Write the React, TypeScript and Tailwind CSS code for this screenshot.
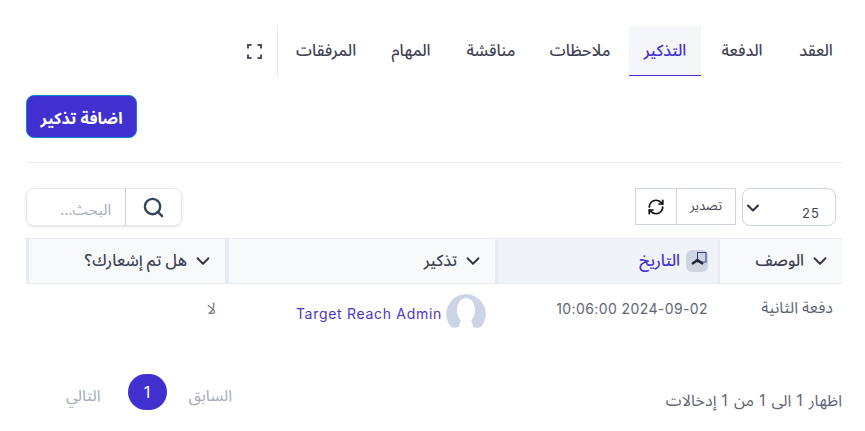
import { ChevronDown, RefreshCw, Search } from 'lucide-react'

const font = "font-['Noto_Sans_Arabic','DejaVu_Sans',sans-serif]"

const tabs = [
  { label: 'العقد', width: 'w-[66px]' },
  { label: 'الدفعة', width: 'w-[82px]' },
  { label: 'التذكير', width: 'w-[72px]', active: true },
  { label: 'ملاحظات', width: 'w-[98px]' },
  { label: 'مناقشة', width: 'w-[80px]' },
  { label: 'المهام', width: 'w-[80px]' },
  { label: 'المرفقات', width: 'w-[90px]' },
]

function Tabs() {
  return (
    <div className="flex items-stretch h-[50px] -mr-[7px]">
      {tabs.map(t => (
        <div
          key={t.label}
          className={`${t.width} flex items-center justify-center text-[16px] font-medium ${
            t.active ? 'bg-[#f5f6f9] text-[#4030d0] border-b border-[#4030d0]' : 'text-[#3f4254]'
          }`}
        >
          {t.label}
        </div>
      ))}
      <div className="w-px bg-[#e4e9f0] mr-[3px]" />
      <div className="flex items-center pr-[15px]">
        <svg width="15" height="15" viewBox="0 0 15 15" fill="none" stroke="#4a5060" strokeWidth="2">
          <path d="M1 4.5V1h3.5M10.5 1H14v3.5M14 10.5V14h-3.5M4.5 14H1v-3.5" />
        </svg>
      </div>
    </div>
  )
}

function HeaderCell({ label, width, active }: { label: string; width: string; active?: boolean }) {
  return (
    <div
      className={`${width} flex items-center h-full text-[16px] font-medium ${
        active ? 'bg-[#f0f3f8] text-[#4030d0] gap-[6px] pr-[10px]' : 'bg-[#f8f9fb] text-[#3f4254] gap-[5px] pr-[11px]'
      }`}
    >
      {active ? (
        <span className="w-[22px] h-[22px] rounded-[6px] bg-[#cdd5e0]">
          <svg width="22" height="22" viewBox="0 0 22 22" fill="none">
            <rect x="11.5" y="2.5" width="8.5" height="9.5" stroke="#3a3a8c" />
            <path d="M6 14l5.5-4 5.5 4" stroke="#1e2433" strokeWidth="2.25" />
          </svg>
        </span>
      ) : (
        <ChevronDown size={22} className="text-[#2d3340]" strokeWidth={2} />
      )}
      <span>{label}</span>
    </div>
  )
}

export default function App() {
  return (
    <div dir="rtl" className={`${font} w-[865px] h-[431px] bg-white pl-[26px] pr-[23px] pt-[26px] overflow-hidden`}>
      <Tabs />

      <div className="flex justify-end mt-[19px]">
        <button className="w-[111px] h-[43px] pt-[4px] rounded-[8px] bg-[#4030d0] border border-[#0f86c9] text-white text-[16px] font-bold">
          اضافة تذكير
        </button>
      </div>

      <div className="h-px bg-[#eceef2] mt-[24px]" />

      <div className="flex justify-between items-start mt-[25px]">
        <div className="flex gap-[6px] mr-[6px]">
          <div className="w-[94px] h-[38px] rounded-[8px] border border-[#cdd5e0] relative">
            <ChevronDown size={20} strokeWidth={2.5} className="absolute left-0 top-[9px] text-[#2d3340]" />
            <span className="absolute left-[59px] top-[15px] text-[13px] tracking-[1px] font-['Inter',sans-serif] text-[#3f4254]">25</span>
          </div>
          <div className="flex h-[37px] border border-[#cdd5e0]">
            <div className="w-[58px] flex items-center justify-center text-[13px] text-[#3f4254]">تصدير</div>
            <div className="w-[41px] border-r border-[#cdd5e0] flex items-center justify-center">
              <RefreshCw size={18} strokeWidth={2.25} className="text-[#111]" />
            </div>
          </div>
        </div>

        <div className="flex w-[156px] h-[38px] rounded-[8px] border border-[#e6e8ec] shadow-sm">
          <div className="w-[55px] flex items-center justify-center">
            <Search size={23} strokeWidth={2.5} className="text-[#33475b]" />
          </div>
          <div className="flex-1 border-r border-[#cfcfcf] flex items-center pr-[14px] pt-[6px] text-[15px] text-[#a3adba]">
            البحث...
          </div>
        </div>
      </div>

      <div className="mt-[12px] flex h-[46px] border-y border-[#e8ecf2] border-l-[3px] border-l-[#e8ecf2] bg-[#e8ecf2]">
        <HeaderCell label="الوصف" width="w-[122px]" />
        <HeaderCell label="التاريخ" width="w-[220px] mr-[2px]" active />
        <HeaderCell label="تذكير" width="w-[266px] mr-[3px]" />
        <HeaderCell label="هل تم إشعارك؟" width="flex-1 mr-[4px]" />
      </div>

      <div className="flex h-[57px] text-[16px] text-[#5e6675]">
        <div className="w-[125px] pr-[9px] pt-[12px]">دفعة الثانية</div>
        <div className="w-[222px] pr-[9px] pt-[14px] text-[14px] tracking-[0.4px] font-['Inter',sans-serif]" dir="ltr">
          <div className="text-right">10:06:00 2024-09-02</div>
        </div>
        <div className="w-[271px] flex pl-[4px] pt-[10px] items-start gap-[4px] pr-[9px]">
          <svg width="40" height="36" viewBox="0 0 40 36">
            <path
              d="M20 0a20 20 0 0 1 15 33c-2 1-5 1-8 0 0-3-1-4-2-6 3-4 4-8 4-11 0-7-4-12-9-12s-9 5-9 12c0 3 1 7 4 11-1 2-2 3-2 6-3 1-6 1-8 0A20 20 0 0 1 20 0z"
              fill="#cdd5e4"
            />
          </svg>
          <span className="text-[#4a35c8] pt-[9px] text-[14px] tracking-[0.7px] font-['Inter',sans-serif]">Target Reach Admin</span>
        </div>
        <div className="flex-1 pr-[8px] pt-[13px] text-[#767d8a]">لا</div>
      </div>

      <div className="flex justify-between items-start mt-[33px]">
        <div className="text-[16px] text-[#5e6675] pt-[15px]">اظهار 1 الى 1 من 1 إدخالات</div>
        <div className="flex items-center text-[16px] text-[#a3adba] ml-[40px]">
          <span className="ml-[22px] pt-[8px]">السابق</span>
          <span className="w-[39px] h-[36px] rounded-full bg-[#4030d0] text-white flex items-center justify-center font-['Inter',sans-serif]">1</span>
          <span className="mr-[27px] pt-[8px]">التالي</span>
        </div>
      </div>
    </div>
  )
}
